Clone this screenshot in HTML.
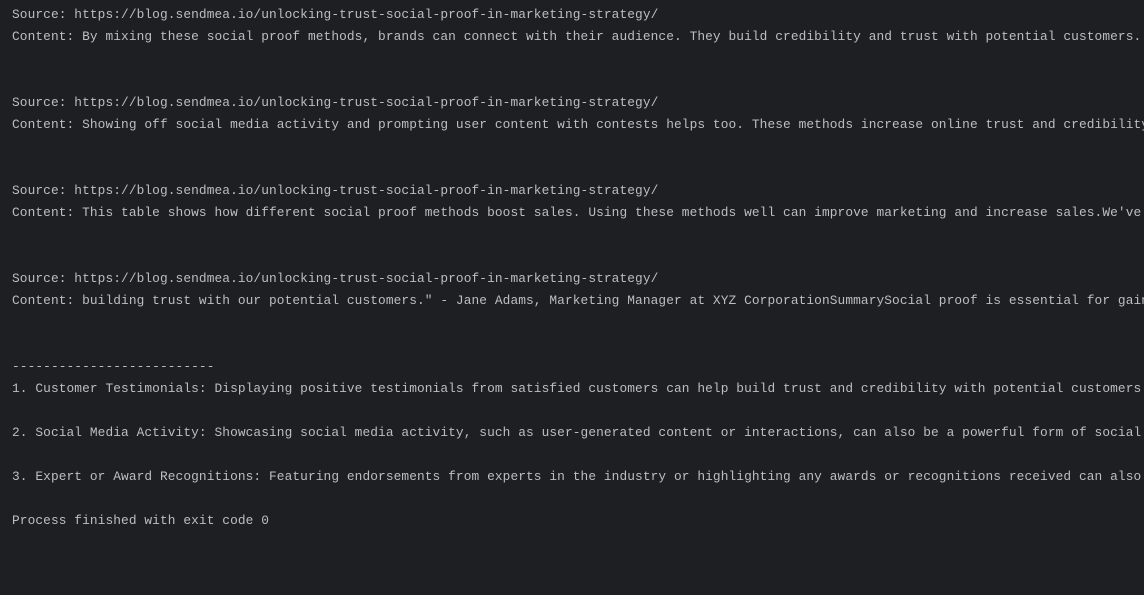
<!DOCTYPE html>
<html><head><style>
html,body{margin:0;padding:0;background:#1e1f22;width:1144px;height:595px;overflow:hidden}
pre{margin:0;padding:4px 0 0 12px;font-family:"Liberation Mono",monospace;font-size:12.83px;letter-spacing:0.09px;line-height:22px;color:#bcbec4;white-space:pre}
</style></head><body><pre>Source: https://blog.sendmea.io/unlocking-trust-social-proof-in-marketing-strategy/
Content: By mixing these social proof methods, brands can connect with their audience. They build credibility and trust with potential customers.


Source: https://blog.sendmea.io/unlocking-trust-social-proof-in-marketing-strategy/
Content: Showing off social media activity and prompting user content with contests helps too. These methods increase online trust and credibility.


Source: https://blog.sendmea.io/unlocking-trust-social-proof-in-marketing-strategy/
Content: This table shows how different social proof methods boost sales. Using these methods well can improve marketing and increase sales.We've


Source: https://blog.sendmea.io/unlocking-trust-social-proof-in-marketing-strategy/
Content: building trust with our potential customers." - Jane Adams, Marketing Manager at XYZ CorporationSummarySocial proof is essential for gaining


--------------------------
1. Customer Testimonials: Displaying positive testimonials from satisfied customers can help build trust and credibility with potential customers.

2. Social Media Activity: Showcasing social media activity, such as user-generated content or interactions, can also be a powerful form of social proof.

3. Expert or Award Recognitions: Featuring endorsements from experts in the industry or highlighting any awards or recognitions received can also help.

Process finished with exit code 0
</pre></body></html>
